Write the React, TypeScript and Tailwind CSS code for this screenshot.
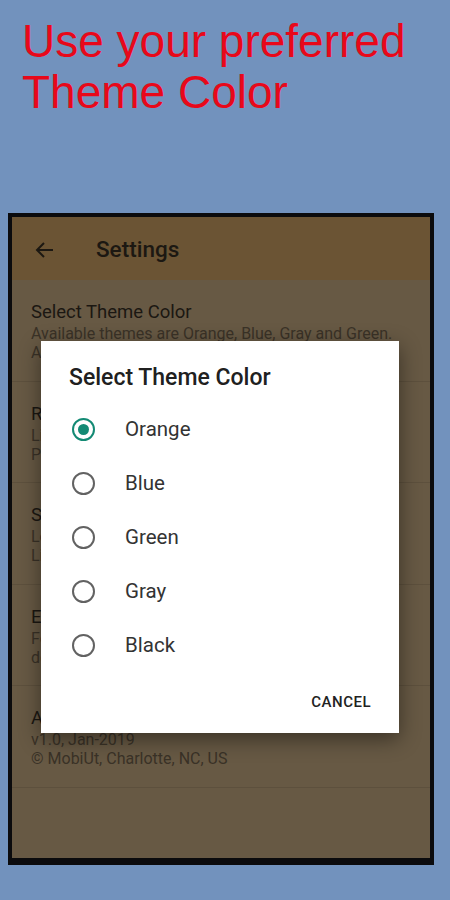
import React from "react";

const themes = ["Orange", "Blue", "Green", "Gray", "Black"];

const rows = [
  {
    title: "Select Theme Color",
    lines: ["Available themes are Orange, Blue, Gray and Green.", "Applied immediately after selection."],
  },
  {
    title: "Rate This App",
    lines: ["Like this app? Tell others by rating it on Google", "Play Store. Your feedback helps us to improve it,"],
  },
  {
    title: "Share This App",
    lines: ["Let your friends and family know about this app.", "Link will be shared through your favourite apps."],
  },
  {
    title: "Email Feedback",
    lines: ["For questions, suggestions or issues, email to the", "developer. We will reply as soon as possible."],
  },
  {
    title: "About",
    lines: ["v1.0, Jan-2019", "© MobiUt, Charlotte, NC, US"],
  },
];

function Radio({ checked }: { checked: boolean }) {
  return (
    <div
      className={
        checked
          ? "w-[23px] h-[23px] rounded-full border-2 border-[#138a74] flex items-center justify-center"
          : "w-[23px] h-[23px] rounded-full border-2 border-[#626262]"
      }
    >
      {checked && <div className="w-[11px] h-[11px] rounded-full bg-[#138a74]" />}
    </div>
  );
}

export default function App() {
  return (
    <div className="w-[450px] h-[900px] bg-[#7292bd] overflow-hidden" style={{ fontFamily: "Roboto, 'Noto Sans', sans-serif" }}>
      <h1
        className="pt-[16px] pl-[22px] text-[46px] leading-[51px] text-[#e8081a]"
        style={{ fontFamily: "'Liberation Sans', Arial, sans-serif" }}
      >
        Use your preferred
        <br />
        Theme Color
      </h1>

      {/* phone frame */}
      <div className="mt-[95px] ml-[8px] w-[426px] h-[652px] border-4 border-b-[7px] border-[#0b0b0d] bg-[#675944] relative">
        <div className="h-[63px] pt-[3px] bg-[#6b5434] flex items-center text-[#1c1812]">
          <svg className="ml-[21px]" width="24" height="24" viewBox="0 0 24 24" fill="none" stroke="currentColor" strokeWidth="2">
            <path d="M20 12H4.5" />
            <path d="M11 5l-7 7 7 7" />
          </svg>
          <span className="ml-[39px] text-[22.5px] font-medium">Settings</span>
        </div>

        <div>
          {rows.map((r) => (
            <div key={r.title} className="h-[101.5px] pt-[21px] pl-[19px] pr-[14px] border-b border-[#5d503d] overflow-hidden">
              <div className="text-[18.5px] leading-[23px] text-[#1b1712]">{r.title}</div>
              {r.lines.map((l) => (
                <div key={l} className="text-[16px] leading-[19px] text-[#3a3227] whitespace-nowrap">
                  {l}
                </div>
              ))}
            </div>
          ))}
        </div>

        {/* dialog */}
        <div className="absolute left-[29px] top-[124px] w-[358px] h-[392px] bg-white shadow-[0_6px_20px_rgba(0,0,0,0.45)]">
          <div className="pt-[22px] pl-[28px] text-[23px] leading-[30px] font-medium text-[#202020]">Select Theme Color</div>
          <div className="mt-[9px]">
            {themes.map((t, i) => (
              <div key={t} className="h-[54px] flex items-center pl-[31px]">
                <Radio checked={i === 0} />
                <span className="ml-[30px] text-[20.5px] text-[#333]">{t}</span>
              </div>
            ))}
          </div>
          <div className="h-[61px] flex items-center justify-end pr-[28px]">
            <span className="text-[15px] font-medium tracking-[0.5px] text-[#222]">CANCEL</span>
          </div>
        </div>
      </div>
    </div>
  );
}
